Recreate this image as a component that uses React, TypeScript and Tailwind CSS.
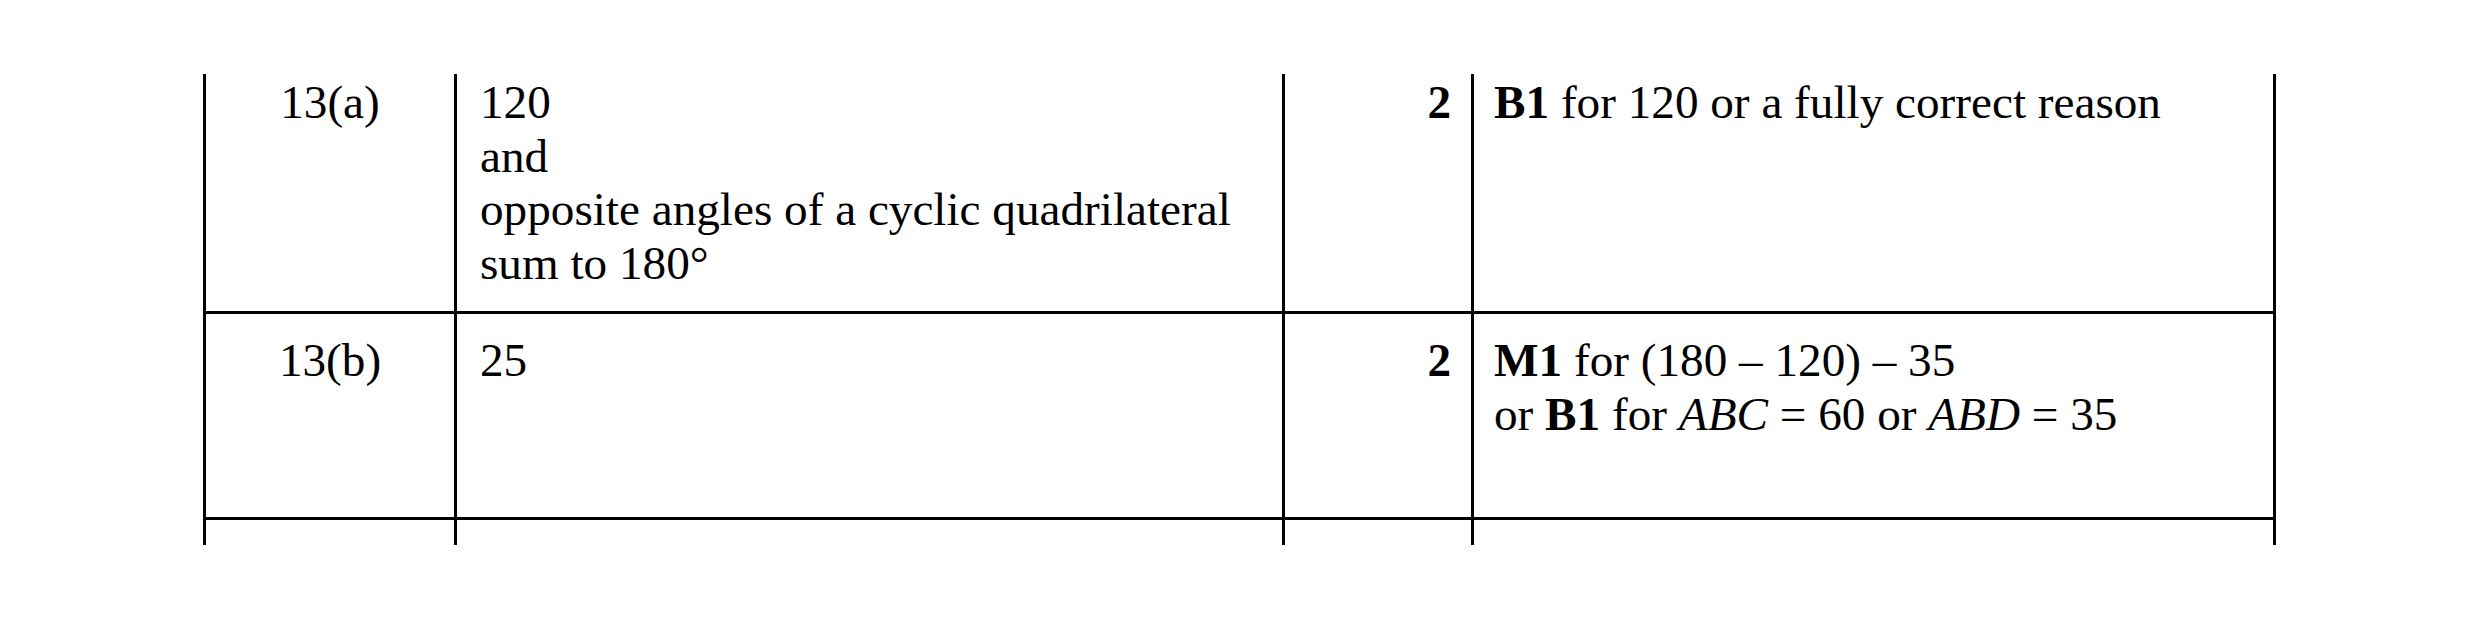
type Row = {
  q: string;
  answer: React.ReactNode;
  mark: string;
  notes: React.ReactNode;
};

const rows: Row[] = [
  {
    q: "13(a)",
    answer: (
      <>
        <div>120</div>
        <div>and</div>
        <div>opposite angles of a cyclic quadrilateral</div>
        <div>sum to 180°</div>
      </>
    ),
    mark: "2",
    notes: (
      <div>
        <b>B1</b> for 120 or a fully correct reason
      </div>
    ),
  },
  {
    q: "13(b)",
    answer: <div>25</div>,
    mark: "2",
    notes: (
      <>
        <div>
          <b>M1</b> for (180 – 120) – 35
        </div>
        <div>
          or <b>B1</b> for <i>ABC</i> = 60 or <i>ABD</i> = 35
        </div>
      </>
    ),
  },
];

function Cells({ row, first }: { row?: Row; first?: boolean }) {
  const pad = first ? "pt-[2px]" : "pt-[20px]";
  return (
    <>
      <div className={`w-[251px] border-l-[3px] border-black text-center ${pad}`}>
        {row?.q}
      </div>
      <div className={`w-[828px] border-l-[3px] border-black pl-[23px] ${pad}`}>
        {row?.answer}
      </div>
      <div className={`w-[189px] border-l-[3px] border-black pr-[20px] text-right font-bold ${pad}`}>
        {row?.mark}
      </div>
      <div className={`w-[805px] border-x-[3px] border-black pl-[20px] ${pad}`}>
        {row?.notes}
      </div>
    </>
  );
}

export default function App() {
  return (
    <div className="h-[621px] w-[2480px] overflow-hidden bg-white pt-[74px] pl-[203px] font-['Liberation_Serif','Times_New_Roman',serif] text-[47.2px] leading-[53.5px] text-black">
      <div className="w-[2073px]">
        <div className="flex h-[237px]">
          <Cells row={rows[0]} first />
        </div>
        <div className="flex h-[206px] border-t-[3px] border-black">
          <Cells row={rows[1]} />
        </div>
        <div className="flex h-[28px] border-t-[3px] border-black">
          <Cells />
        </div>
      </div>
    </div>
  );
}
